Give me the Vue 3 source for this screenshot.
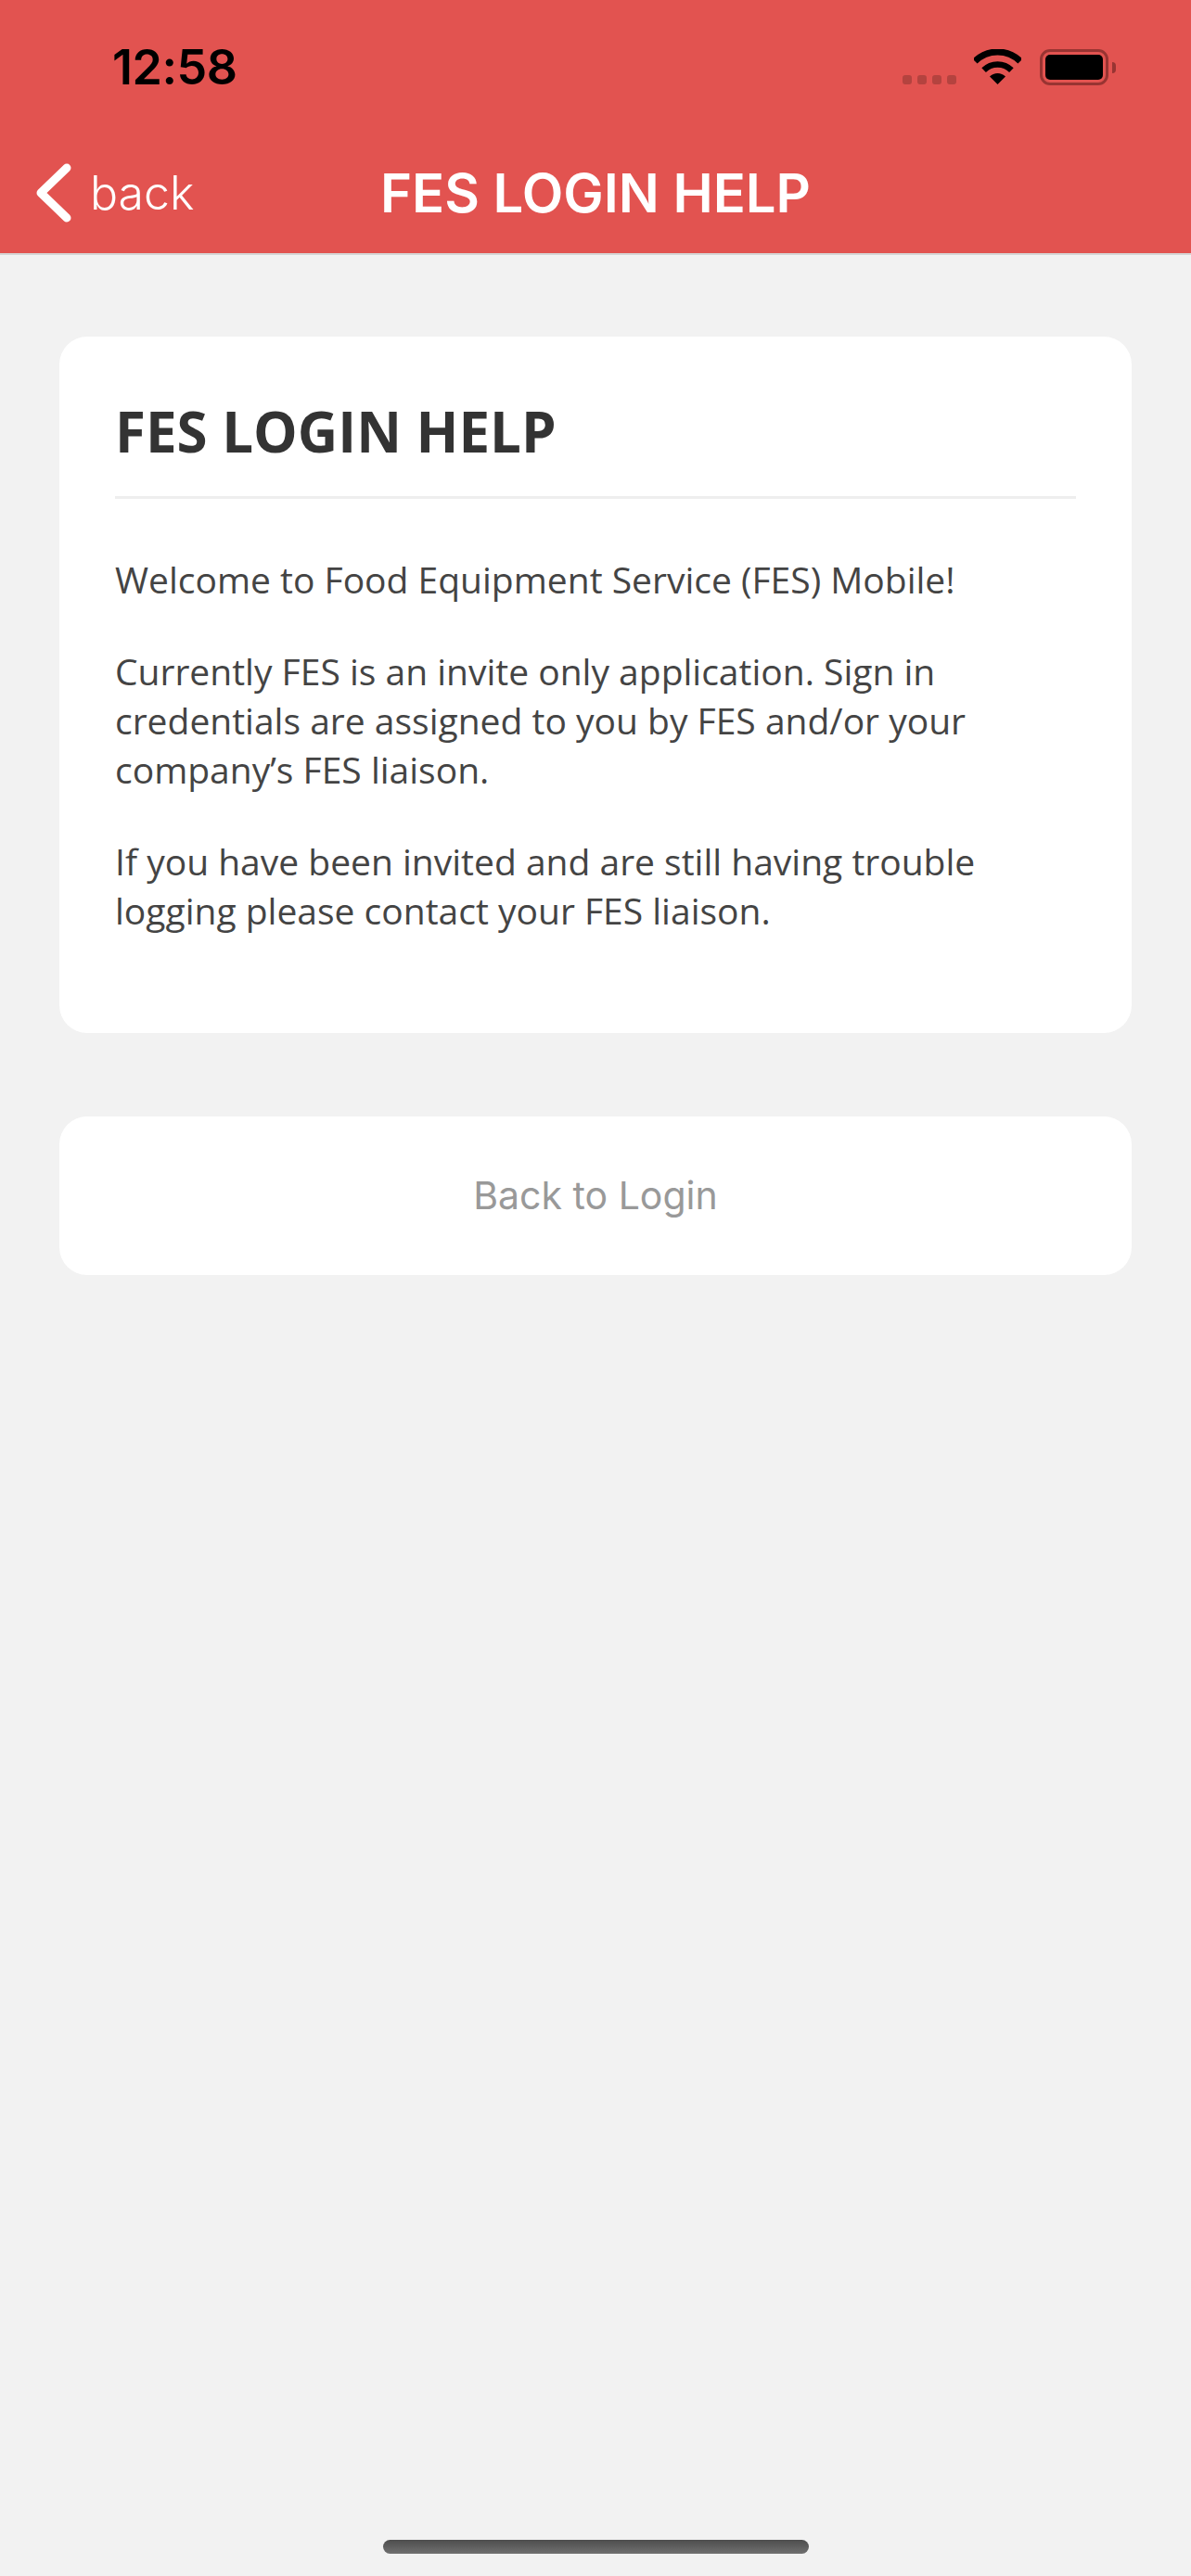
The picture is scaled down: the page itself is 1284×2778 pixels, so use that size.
<script setup>
const paragraphs = [
  "Welcome to Food Equipment Service (FES) Mobile!",
  "Currently FES is an invite only application. Sign in credentials are assigned to you by FES and/or your company’s FES liaison.",
  "If you have been invited and are still having trouble logging please contact your FES liaison.",
];
</script>

<template>
  <main class="page">
    <header class="header">
      <div class="status">
        <span class="time">12:58</span>
        <div class="status-icons">
          <div class="signal">
            <i v-for="n in 4" :key="n"></i>
          </div>
          <svg class="wifi" width="51" height="38" viewBox="0 0 51 38">
            <path d="M1.1 13.1A34.5 34.5 0 0 1 49.9 13.1" fill="none" stroke="#000" stroke-width="7" />
            <path d="M10.6 22.6A21 21 0 0 1 40.4 22.6" fill="none" stroke="#000" stroke-width="6.5" />
            <path d="M25.5 38L17 29.5A12 12 0 0 1 34 29.5Z" fill="#000" />
          </svg>
          <div class="battery">
            <div class="battery-body"><div class="battery-level"></div></div>
            <div class="battery-cap"></div>
          </div>
        </div>
      </div>
      <nav class="nav">
        <a class="back">
          <svg class="chevron" width="38" height="64" viewBox="0 0 38 64">
            <path d="M33 5L5 32L33 59" fill="none" stroke="#fff" stroke-width="9" stroke-linecap="round" stroke-linejoin="round" />
          </svg>
          <span>back</span>
        </a>
        <h2 class="nav-title">FES LOGIN HELP</h2>
      </nav>
    </header>

    <section class="content">
      <article class="card">
        <h1>FES LOGIN HELP</h1>
        <p v-for="text in paragraphs" :key="text">{{ text }}</p>
      </article>
      <button class="login-btn">Back to Login</button>
    </section>

    <div class="home-bar"></div>
  </main>
</template>

<style scoped>
.page {
  height: 2778px;
  background: #f2f2f2;
  display: flex;
  flex-direction: column;
  overflow: hidden;
}

.header {
  height: 273px;
  flex-shrink: 0;
  background: #e25350;
  border-bottom: 2px solid #d6d6d6;
  box-sizing: content-box;
}

.status {
  height: 145px;
  display: flex;
  justify-content: space-between;
  padding: 0 81px 0 121px;
  font-family: Inter, sans-serif;
}

.time {
  margin-top: 43px;
  font-size: 52px;
  line-height: 60px;
  font-weight: 600;
  letter-spacing: -0.5px;
  color: #000;
}

.status-icons {
  display: flex;
  align-items: flex-start;
  padding-top: 53px;
}

.signal {
  display: flex;
  gap: 6px;
  margin: 28px 19px 0 0;
}

.signal i {
  width: 10px;
  height: 10px;
  border-radius: 3px;
  background: #b4433f;
}

.wifi {
  display: block;
  margin-right: 20px;
}

.battery {
  display: flex;
  align-items: center;
}

.battery-body {
  width: 74px;
  height: 39px;
  box-sizing: border-box;
  border: 3px solid #983432;
  border-radius: 11px;
  padding: 3px;
}

.battery-level {
  height: 100%;
  background: #000;
  border-radius: 5px;
}

.battery-cap {
  width: 4px;
  height: 12px;
  margin-left: 4px;
  background: #983432;
  border-radius: 0 6px 6px 0;
}

.nav {
  position: relative;
  height: 128px;
  display: flex;
  align-items: center;
  justify-content: center;
  color: #fff;
  font-family: Inter, sans-serif;
}

.back {
  position: absolute;
  left: 39px;
  top: 31px;
  display: flex;
  align-items: center;
  gap: 20px;
  font-size: 50px;
  font-weight: 300;
  line-height: 64px;
}

.chevron {
  display: block;
}

.nav-title {
  margin: 0 0 3px;
  font-size: 58px;
  font-weight: 600;
  line-height: 68px;
}

.content {
  padding: 88px 64px 0;
  display: flex;
  flex-direction: column;
  gap: 90px;
}

.card {
  background: #fff;
  border-radius: 30px;
  padding: 0 60px;
  height: 751px;
  box-sizing: border-box;
  font-family: "Open Sans", sans-serif;
}

.card h1 {
  margin: 0 0 60px;
  padding: 60px 0 27px;
  font-size: 60px;
  line-height: 85px;
  font-weight: 700;
  color: #333;
  border-bottom: 3px solid #eee;
}

.card p {
  margin: 0 0 46px;
  font-size: 39px;
  line-height: 53px;
  color: #444;
}

.login-btn {
  height: 171px;
  padding: 0 0 2px;
  border: none;
  border-radius: 30px;
  background: #fff;
  color: #999;
  font-family: Inter, sans-serif;
  font-size: 41px;
  font-weight: 400;
}

.home-bar {
  width: 459px;
  height: 15px;
  margin: auto auto 24px;
  border-radius: 8px;
  background: linear-gradient(#4d4d4d, #707070);
}
</style>
